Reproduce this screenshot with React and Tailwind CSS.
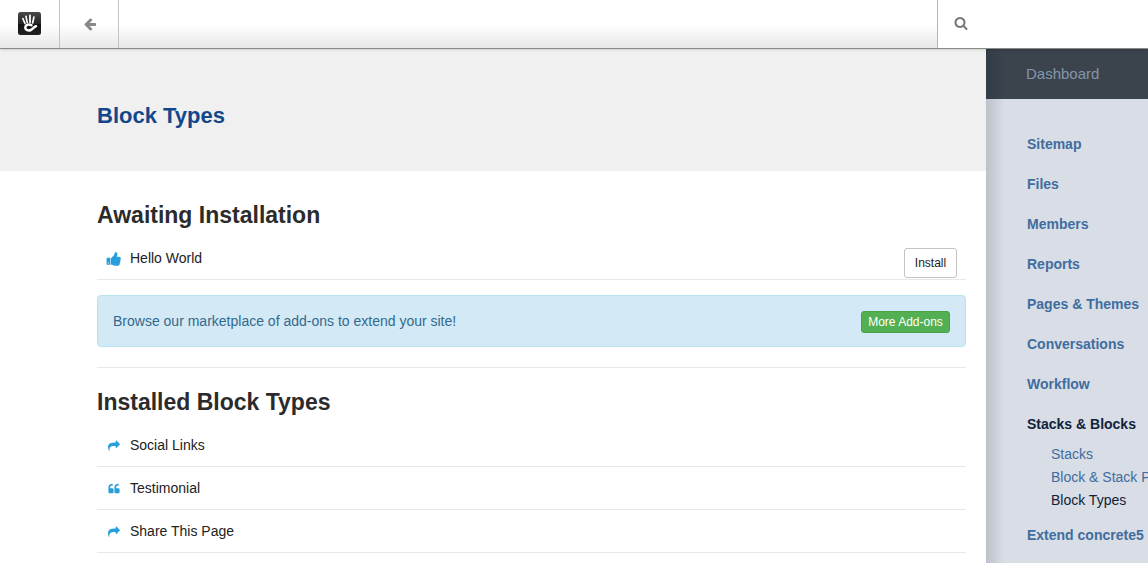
import React from "react";

const ICONS = {
  arrowLeft:
    "M1664 896v128q0 53-32.5 90.5t-84.5 37.5h-704l293 294q38 36 38 90t-38 90l-75 76q-37 37-90 37-52 0-91-37l-651-652q-37-37-37-90 0-52 37-91l651-650q38-38 91-38 52 0 90 38l75 74q38 38 38 91t-38 91l-293 293h704q52 0 84.5 37.5t32.5 90.5z",
  search:
    "M1216 832q0-185-131.5-316.5t-316.5-131.5-316.5 131.5-131.5 316.5 131.5 316.5 316.5 131.5 316.5-131.5 131.5-316.5zm512 832q0 52-38 90t-90 38q-54 0-90-38l-343-342q-179 124-399 124-143 0-273.5-55.5t-225-150-150-225-55.5-273.5 55.5-273.5 150-225 225-150 273.5-55.5 273.5 55.5 225 150 150 225 55.5 273.5q0 220-124 399l343 343q37 37 37 90z",
  thumbsUp:
    "M320 1344q0-26-19-45t-45-19q-27 0-45.5 19t-18.5 45q0 27 18.5 45.5t45.5 18.5q26 0 45-18.5t19-45.5zm160-512v640q0 26-19 45t-45 19h-288q-26 0-45-19t-19-45v-640q0-26 19-45t45-19h288q26 0 45 19t19 45zm1184 0q0 86-55 149 15 44 15 76 3 76-43 137 17 56 0 117-15 57-54 94 9 112-49 181-64 76-197 78h-129q-66 0-144-15.5t-121.5-29-120.5-39.5q-123-43-158-44-26-1-45-19.5t-19-44.5v-641q0-25 18-43.5t43-20.5q24-2 76-59t101-121q68-87 101-120 18-18 31-48t17.5-48.5 13.5-60.5q7-39 12.5-61t19.5-52 34-50q19-19 45-19 46 0 82.5 10.5t60 26 40 40.5 24 45 12 50 5 45 .5 39q0 38-9.5 76t-19 60-27.5 56q-3 6-10 18t-11 22-8 24h277q78 0 135 57t57 135z",
  share:
    "M1792 640q0 26-19 45l-512 512q-19 19-45 19t-45-19-19-45v-256h-224q-98 0-175.5 6t-154 21.5-133 42.5-105.5 69.5-80 101-48.5 138.5-17.5 181q0 55 5 123 0 6 2.5 23.5t2.5 26.5q0 15-8.5 25t-23.5 10q-16 0-28-17-7-9-13-22t-13.5-30-10.5-24q-127-285-127-451 0-199 53-333 162-403 875-403h224v-256q0-26 19-45t45-19 45 19l512 512q19 19 19 45z",
  quote:
    "M832 960v384q0 80-56 136t-136 56h-384q-80 0-136-56t-56-136v-704q0-104 40.5-198.5t109.5-163.5 163.5-109.5 198.5-40.5h64q26 0 45 19t19 45v128q0 26-19 45t-45 19h-64q-106 0-181 75t-75 181v32q0 40 28 68t68 28h224q80 0 136 56t56 136zm896 0v384q0 80-56 136t-136 56h-384q-80 0-136-56t-56-136v-704q0-104 40.5-198.5t109.5-163.5 163.5-109.5 198.5-40.5h64q26 0 45 19t19 45v128q0 26-19 45t-45 19h-64q-106 0-181 75t-75 181v32q0 40 28 68t68 28h224q80 0 136 56t56 136z",
};

const Icon = ({ name, className }) => (
  <svg viewBox="0 0 1792 1792" fill="currentColor" className={className} aria-hidden="true">
    <path d={ICONS[name]} />
  </svg>
);

const Logo = () => (
  <svg viewBox="0 0 23 23" className="h-[23px] w-[23px]" aria-hidden="true">
    <defs>
      <linearGradient id="logo-bg" x1="0" y1="0" x2="0" y2="1">
        <stop offset="0" stopColor="#4a4a4a" />
        <stop offset="0.5" stopColor="#252525" />
        <stop offset="0.52" stopColor="#111" />
        <stop offset="1" stopColor="#222" />
      </linearGradient>
    </defs>
    <rect width="23" height="23" rx="2.5" fill="url(#logo-bg)" />
    <g fill="none" stroke="#fff" strokeLinecap="round">
      <path d="M4.9 6.6 7 11.4" strokeWidth="1.6" />
      <path d="M8 4.4 9.2 10.4" strokeWidth="1.7" />
      <path d="M12 3.4V10.2" strokeWidth="1.8" />
      <path d="M15.9 5.2 14.6 11" strokeWidth="1.7" />
      <path
        d="M13.4 13.2C11 12 7.5 12.6 7.3 15.4 7.3 18.3 10.6 19 12.8 18 15 17 15.6 15.2 18 14.2"
        strokeWidth="2.5"
      />
    </g>
  </svg>
);

const installedBlocks = [
  { name: "Social Links", icon: "share" },
  { name: "Testimonial", icon: "quote" },
  { name: "Share This Page", icon: "share" },
];

const navItems = [
  { label: "Sitemap" },
  { label: "Files" },
  { label: "Members" },
  { label: "Reports" },
  { label: "Pages & Themes" },
  { label: "Conversations" },
  { label: "Workflow" },
  {
    label: "Stacks & Blocks",
    active: true,
    children: [
      { label: "Stacks" },
      { label: "Block & Stack Permissions" },
      { label: "Block Types", active: true },
    ],
  },
  { label: "Extend concrete5" },
];

const Toolbar = () => (
  <header className="relative z-10 flex h-[49px] border-b border-[#8a8c88] bg-linear-to-b from-white from-50% to-[#e8e8e8] shadow-sm">
    <a
      href="#home"
      aria-label="concrete5"
      className="flex w-[60px] items-center justify-center border-r border-[#c3c3c3] pb-0.5"
    >
      <Logo />
    </a>
    <a
      href="#back"
      aria-label="Back"
      className="flex w-[59px] items-center justify-center border-r border-[#c3c3c3] pl-0.5 text-[#888]"
    >
      <Icon name="arrowLeft" className="h-3.5 w-3.5" />
    </a>
    <label className="ml-auto flex w-[211px] items-center border-l border-[#b5b5b5] bg-white pb-0.5 pl-4 text-[#777]">
      <Icon name="search" className="h-3.5 w-3.5" />
      <input type="search" aria-label="Search" className="min-w-0 flex-1 px-2 text-sm outline-none" />
    </label>
  </header>
);

const BlockRow = ({ name, icon, children }) => (
  <li className="flex h-[43px] items-center border-b border-[#e8e8e8] px-[9px]">
    <span className="flex w-4 justify-center pt-0.5 text-[#289fdb]">
      <Icon name={icon} className={icon === "thumbsUp" ? "h-4 w-4" : "h-3 w-3"} />
    </span>
    <a href="#block" className="ml-2 flex-1 text-[14px] text-[#222]">
      {name}
    </a>
    {children}
  </li>
);

const Sidebar = () => (
  <aside className="w-[162px] shrink-0 overflow-hidden bg-[#d9dde5] bg-linear-to-r from-[#bcc1ca] to-[#d9dde5] to-[18px] whitespace-nowrap">
    <h2 className="flex h-[50px] items-center bg-linear-to-r from-[#313c46] to-[#3b444d] to-[18px] pl-10 text-[15px] text-[#8495ab]">
      Dashboard
    </h2>
    <nav className="pt-[35px] pl-[41px] text-[14px] leading-5">
      <ul>
        {navItems.map((item) => (
          <li key={item.label} className={item.children ? "mb-[13px]" : "mb-5"}>
            <a
              href="#nav"
              className={item.active ? "font-bold text-[#10233a]" : "font-bold text-[#3f6d9f]"}
            >
              {item.label}
            </a>
            {item.children && (
              <ul className="mt-[9px] pl-6 leading-[23px]">
                {item.children.map((child) => (
                  <li key={child.label}>
                    <a href="#nav" className={child.active ? "text-[#10233a]" : "text-[#3f6d9f]"}>
                      {child.label}
                    </a>
                  </li>
                ))}
              </ul>
            )}
          </li>
        ))}
      </ul>
    </nav>
  </aside>
);

export default function App() {
  return (
    <div className="flex h-screen flex-col overflow-hidden bg-white font-['Liberation_Sans',Arial,sans-serif] text-[#222]">
      <Toolbar />
      <div className="flex min-h-0 flex-1">
        <main className="min-w-0 flex-1">
          <div className="flex h-[122px] items-center bg-[#f0f0f0] pt-2.5 pl-[97px]">
            <h1 className="text-[22px] font-bold text-[#12488b]">Block Types</h1>
          </div>
          <div className="pt-[30px] pr-5 pl-[97px]">
            <section>
              <h2 className="text-[23px] leading-7 font-bold text-[#2b2b2b]">Awaiting Installation</h2>
              <ul className="mt-2">
                <BlockRow name="Hello World" icon="thumbsUp">
                  <button className="mt-2.5 h-[30px] w-[53px] rounded-[3px] border border-[#c3c3c3] bg-white text-[12px] text-[#222]">
                    Install
                  </button>
                </BlockRow>
              </ul>
            </section>
            <div className="mt-[15px] flex h-[52px] items-center justify-between rounded border border-[#b7e2ee] bg-[#d4e9f6] px-[15px]">
              <p className="text-[14px] text-[#31698e]">
                Browse our marketplace of add-ons to extend your site!
              </p>
              <a
                href="#addons"
                className="mt-0.5 flex h-[22px] w-[89px] items-center justify-center rounded-[3px] border border-[#47a447] bg-[#52b052] text-[12px] text-white"
              >
                More Add-ons
              </a>
            </div>
            <hr className="my-5 border-[#e8e8e8]" />
            <section>
              <h2 className="text-[23px] leading-7 font-bold text-[#2b2b2b]">Installed Block Types</h2>
              <ul className="mt-2">
                {installedBlocks.map((block) => (
                  <BlockRow key={block.name} name={block.name} icon={block.icon} />
                ))}
              </ul>
            </section>
          </div>
        </main>
        <Sidebar />
      </div>
    </div>
  );
}
